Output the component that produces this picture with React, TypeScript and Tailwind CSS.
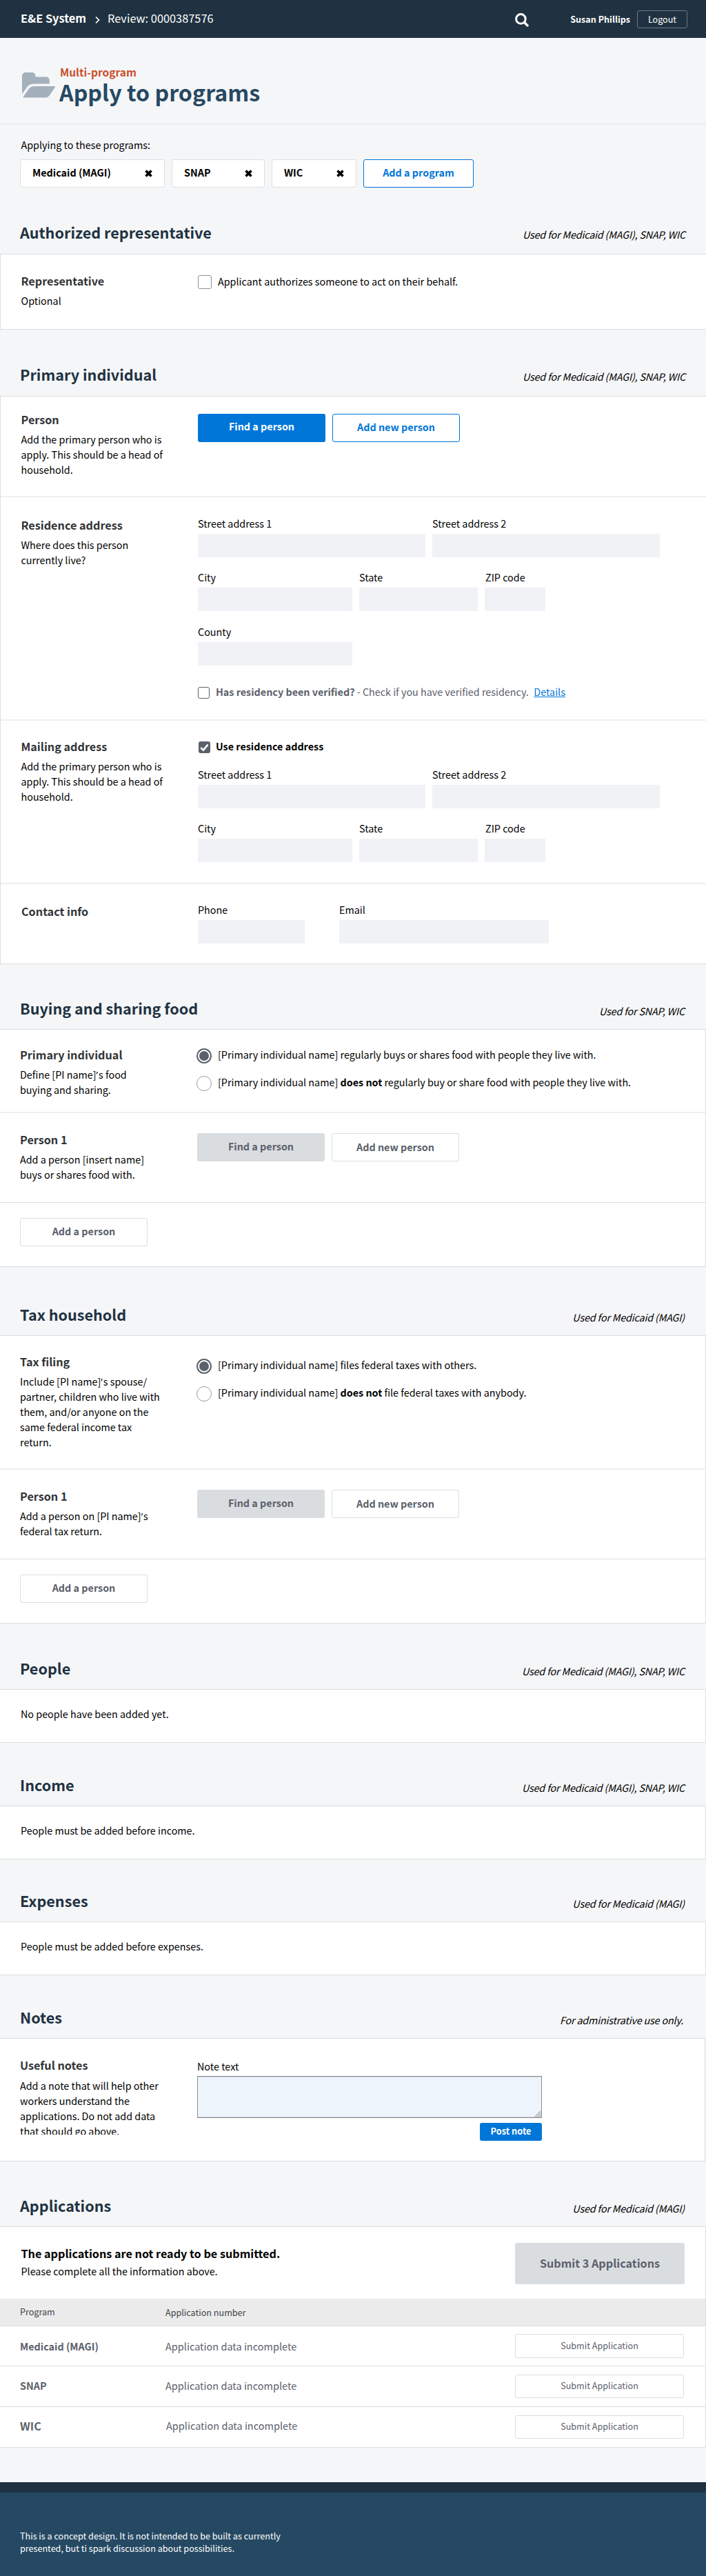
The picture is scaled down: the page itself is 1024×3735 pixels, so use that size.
import React from 'react';

type Kids = { children?: React.ReactNode };

const MEDICAID_SNAP_WIC = 'Used for Medicaid (MAGI), SNAP, WIC';

function SearchIcon() {
  return (
    <svg width="20" height="20" viewBox="0 0 20 20" fill="none" stroke="#fff" strokeLinecap="round">
      <circle cx="8.4" cy="8.4" r="6.8" strokeWidth="3" />
      <path d="M13.6 13.6L18 18" strokeWidth="3.4" />
    </svg>
  );
}

function FolderIcon() {
  return (
    <svg width="48" height="37" viewBox="0 0 48 37" fill="#a4b0bc">
      <path d="M0 31.3V5.5C0 2.2 2.200 0 5.500 0H14C17.300 0 19.500 2.200 19.500 5.500V6.600H34.500C37.700 6.600 39.700 8.600 39.700 11.600V16.400H17.500C13 16.400 10.300 17.600 7.800 20.600Z" />
      <path d="M2.300 36.500C1.600 36.500 1.400 35.700 1.900 35L9.500 24.300C11.800 21.200 14.300 20 17.800 20H47C48 20 48.300 20.800 47.800 21.600L40.800 32C38.700 35.100 36.500 36.500 33.200 36.500Z" />
    </svg>
  );
}

function CloseIcon() {
  return (
    <svg className="mt-[7px]" width="11" height="11" viewBox="0 0 11 11" stroke="#000" strokeWidth="3.7">
      <path d="M1.500 1.500L9.500 9.500M9.500 1.500L1.500 9.500" />
    </svg>
  );
}

/* The CJK face draws the curly apostrophe at full width, so it is set in a Latin face. */
function Apostrophe() {
  return <span className="font-['Open_Sans'] leading-none tracking-[1px]">’</span>;
}

function Chip({ label, className }: { label: string; className: string }) {
  return (
    <div className={`flex h-[41px] items-start justify-between rounded-[3px] border border-[#dcdee0] bg-white pt-[7px] pr-[17px] pl-[17px] font-bold ${className}`}>
      <span>{label}</span>
      <CloseIcon />
    </div>
  );
}

function SectionHead({ title, note, className, noteClass = '' }: { title: string; note: string; className: string; noteClass?: string }) {
  return (
    <div className={`flex items-end justify-between pl-[29px] ${className}`}>
      <h2 className="text-[21.6px] leading-[30px] font-bold text-[#203241]">{title}</h2>
      <p className={`tracking-[-0.17px] italic ${noteClass}`}>{note}</p>
    </div>
  );
}

function Card({ children, className = '' }: Kids & { className?: string }) {
  return <div className={`border-y border-[#dcdee0] bg-white ${className}`}>{children}</div>;
}

function SideText({ title, children, className, textClass = 'mt-[7px]' }: Kids & { title: string; className: string; textClass?: string }) {
  return (
    <div className={`w-[286px] shrink-0 ${className}`}>
      <h3 className="text-[16.2px] leading-[22px] font-bold text-[#323437]">{title}</h3>
      <p className={`whitespace-nowrap ${textClass}`}>{children}</p>
    </div>
  );
}

function Field({ label, className, labelClass = '' }: { label: string; className: string; labelClass?: string }) {
  return (
    <label className={`flex flex-col gap-1 ${className}`}>
      <span className={labelClass}>{label}</span>
      <input className="block h-[34px] w-full bg-[#f1f2f6]" />
    </label>
  );
}

function StreetFields() {
  return (
    <div className="flex gap-[10px]">
      <Field label="Street address 1" className="w-[330px]" />
      <Field label="Street address 2" className="w-[330px]" />
    </div>
  );
}

function CityFields() {
  return (
    <div className="mt-[18px] flex gap-[10px]">
      <Field label="City" className="w-[224px]" />
      <Field label="State" className="w-[172px]" />
      <Field label="ZIP code" className="w-[88px]" labelClass="pl-px" />
    </div>
  );
}

function Radio({ checked = false, children }: Kids & { checked?: boolean }) {
  return (
    <div className="flex h-10 items-start">
      {checked ? (
        <span className="mt-[2px] -ml-px flex size-[22px] items-center justify-center rounded-full border-2 border-[#5b616b]">
          <span className="size-[14px] rounded-full bg-[#5b616b]" />
        </span>
      ) : (
        <span className="mt-[2px] -ml-px size-[22px] rounded-full border border-[#9b9da1]" />
      )}
      <span className="ml-[9px]">{children}</span>
    </div>
  );
}

function PersonButtons({ active = false }: { active?: boolean }) {
  return (
    <div className="flex gap-[10px] font-bold">
      <button className={`flex h-[41px] w-[185px] items-start justify-center rounded-[3px] ${active ? 'bg-[#0076d8] pt-[7px] text-white' : 'bg-[#dadde0] pt-2 text-[#5b616b]'}`}>
        Find a person
      </button>
      <button className={`flex h-[41px] w-[185px] items-start justify-center rounded-[3px] border bg-white ${active ? 'border-[#0076d8] pt-[7px] text-[#0076d8]' : 'border-[#dcdee0] pt-2 text-[#5b616b]'}`}>
        Add new person
      </button>
    </div>
  );
}

function AddPersonRow() {
  return (
    <div className="h-[92px] pt-[22px] pl-[29px]">
      <button className="flex h-[41px] w-[185px] items-start justify-center rounded-[3px] border border-[#dcdee0] bg-white pt-[7px] font-bold text-[#5b616b]">
        Add a person
      </button>
    </div>
  );
}

const applications = [
  { name: 'Medicaid (MAGI)', row: 'h-[58px]', nameCls: 'mt-[18px]', dataCls: 'mt-[18px]', btn: 'mt-[11px] h-[35px] pt-[7px]' },
  { name: 'SNAP', row: 'h-[59px]', nameCls: 'mt-[17px]', dataCls: 'mt-[17px]', btn: 'mt-[12px] h-[34px] pt-[6px]' },
  { name: 'WIC', row: 'h-[59px]', nameCls: 'mt-[16px] text-[16.2px]', dataCls: 'mt-[16px] pl-px', btn: 'mt-[12px] h-[34px] pt-[6px]' },
];

export default function App() {
  return (
    <div
      className="flex h-[3735px] w-[1024px] flex-col bg-[#f5f6f8] text-[14.35px] leading-[22px] text-black"
      style={{ fontFamily: '"Noto Sans CJK SC", "Noto Sans", sans-serif' }}
    >
      <header className="flex h-[55px] shrink-0 items-start bg-[#203241] pr-[27px] pl-[30px] text-white">
        <div className="mt-[15px] flex items-start text-[16.35px]">
          <span className="font-bold">E&amp;E System</span>
          <svg className="mt-[9px] mr-[11px] ml-[13px]" width="7" height="10" viewBox="0 0 7 10" fill="none" stroke="#fff" strokeWidth="1.6">
            <path d="M1 0.700L5.500 5L1 9.300" />
          </svg>
          <span>Review: 0000387576</span>
        </div>
        <div className="mt-[19px] ml-auto">
          <SearchIcon />
        </div>
        <div className="flex w-[230px] items-start justify-end gap-[10px] text-[12.6px] leading-[18px]">
          <span className="mt-[19px] font-bold">Susan Phillips</span>
          <button className="mt-[15px] flex h-[26px] w-[73px] justify-center rounded-[3px] border border-[#6d7883] pt-[3px]">Logout</button>
        </div>
      </header>

      <div className="flex h-[126px] shrink-0 items-start border-b-2 border-[#edeef0] pt-[38px] pl-8">
        <div className="mt-[12px] w-[54px]">
          <FolderIcon />
        </div>
        <div>
          <p className="pl-[1px] text-[15.5px] leading-[22px] font-bold text-[#c8512d]">Multi-program</p>
          <h1 className="-mt-[5px] text-[32.2px] leading-[46px] font-bold text-[#264963]">Apply to programs</h1>
        </div>
      </div>

      <div className="h-[91px] shrink-0 pt-[18px] pl-[29px]">
        <p className="pl-[1.500px]">Applying to these programs:</p>
        <div className="mt-[10px] flex gap-[10px]">
          <Chip label="Medicaid (MAGI)" className="w-[210px]" />
          <Chip label="SNAP" className="w-[135px]" />
          <Chip label="WIC" className="w-[123px]" />
          <button className="flex h-[41px] w-[160px] items-start justify-center rounded-[3px] border border-[#0076d8] bg-white pt-[7px] font-bold text-[#0076d8]">
            Add a program
          </button>
        </div>
      </div>

      <SectionHead title="Authorized representative" note={MEDICAID_SNAP_WIC} className="h-[96px] shrink-0 pr-[30px] pb-4" noteClass="mb-px" />
      <Card className="flex h-[110px] shrink-0 border-l">
        <SideText title="Representative" className="pt-[27px] pl-[29.5px]">Optional</SideText>
        <div className="flex items-start pt-[28px]">
          <span className="mt-[2px] size-5 rounded-[3px] border border-[#8f9297]" />
          <span className="ml-[9px]">Applicant authorizes someone to act on their behalf.</span>
        </div>
      </Card>

      <SectionHead title="Primary individual" note={MEDICAID_SNAP_WIC} className="h-[96px] shrink-0 pr-[30px] pb-4" noteClass="mb-px" />
      <Card className="shrink-0 border-l">
        <div className="flex h-[146px] border-b-2 border-[#eeeff0]">
          <SideText title="Person" className="pt-[22px] pl-[29.5px]">
            Add the primary person who is<br />apply. This should be a head of<br />household.
          </SideText>
          <div className="pt-[25px]"><PersonButtons active /></div>
        </div>
        <div className="flex h-[324px] border-b-2 border-[#eeeff0]">
          <SideText title="Residence address" className="pt-[29px] pl-[29.5px]">
            Where does this person<br />currently live?
          </SideText>
          <div className="pt-[27px]">
            <StreetFields />
            <CityFields />
            <Field label="County" className="mt-[19px] w-[224px]" />
            <div className="mt-[27px] flex items-start whitespace-pre text-[#5b616b]">
              <span className="mt-1 size-[17px] rounded-[3px] border border-[#5b616b]" />
              <span className="ml-[9px] font-bold">Has residency been verified?</span>
              <span> - Check if you have verified residency.</span>
              <a className="ml-[7.5px] text-[#0076d8] underline">Details</a>
            </div>
          </div>
        </div>
        <div className="flex h-[237px] border-b-2 border-[#eeeff0]">
          <SideText title="Mailing address" className="pt-[26px] pl-[29.5px]">
            Add the primary person who is<br />apply. This should be a head of<br />household.
          </SideText>
          <div className="pt-[26px]">
            <div className="mb-[19px] flex items-start pl-px">
              <span className="mt-1 flex size-[17px] items-center justify-center rounded-[3px] bg-[#5b616b]">
                <svg width="13" height="12" viewBox="0 0 13 12" fill="none" stroke="#fff" strokeWidth="2.600">
                  <path d="M1.300 6.300L4.900 9.600L11.500 1.600" />
                </svg>
              </span>
              <span className="ml-2 font-bold">Use residence address</span>
            </div>
            <StreetFields />
            <CityFields />
          </div>
        </div>
        <div className="flex h-[115px]">
          <SideText title="Contact info" className="pt-[28px] pl-[30px]" />
          <div className="flex gap-[50px] pt-[26px]">
            <Field label="Phone" className="w-[155px]" />
            <Field label="Email" className="w-[304px]" />
          </div>
        </div>
      </Card>

      <SectionHead title="Buying and sharing food" note="Used for SNAP, WIC" className="h-[94px] shrink-0 pr-[31px] pb-[15px]" />
      <Card className="shrink-0 border-r">
        <div className="flex h-[121px] border-b-2 border-[#eeeff0]">
          <SideText title="Primary individual" className="pt-[25px] pl-[29px]">
            Define [PI name]<Apostrophe />s food<br />buying and sharing.
          </SideText>
          <div className="pt-[25px]">
            <Radio checked>[Primary individual name] regularly buys or shares food with people they live with.</Radio>
            <Radio>[Primary individual name] <b>does not</b> regularly buy or share food with people they live with.</Radio>
          </div>
        </div>
        <div className="flex h-[130px] border-b border-[#dcdee0]">
          <SideText title="Person 1" className="pt-[27px] pl-[29px]">
            Add a person [insert name]<br />buys or shares food with.
          </SideText>
          <div className="pt-[29px]"><PersonButtons /></div>
        </div>
        <AddPersonRow />
      </Card>

      <SectionHead title="Tax household" note="Used for Medicaid (MAGI)" className="h-[99px] shrink-0 pr-[31px] pb-[15px]" />
      <Card className="shrink-0 border-r">
        <div className="flex h-[194px] border-b-2 border-[#eeeff0]">
          <SideText title="Tax filing" className="pt-[26px] pl-[29px]">
            Include [PI name]<Apostrophe />s spouse/<br />partner, children who live with<br />them, and/or anyone on the<br />same federal income tax<br />return.
          </SideText>
          <div className="pt-[31px]">
            <Radio checked>[Primary individual name] files federal taxes with others.</Radio>
            <Radio>[Primary individual name] <b>does not</b> file federal taxes with anybody.</Radio>
          </div>
        </div>
        <div className="flex h-[130px] border-b border-[#dcdee0]">
          <SideText title="Person 1" className="pt-[27px] pl-[29px]">
            Add a person on [PI name]<Apostrophe />s<br />federal tax return.
          </SideText>
          <div className="pt-[29px]"><PersonButtons /></div>
        </div>
        <AddPersonRow />
      </Card>

      <SectionHead title="People" note={MEDICAID_SNAP_WIC} className="h-[95px] shrink-0 pr-[31px] pb-[15px]" />
      <Card className="h-[78px] shrink-0 border-r pt-6 pl-[30px]">No people have been added yet.</Card>

      <SectionHead title="Income" note={MEDICAID_SNAP_WIC} className="h-[91px] shrink-0 pr-[31px] pb-[15px]" />
      <Card className="h-[78px] shrink-0 border-r pt-6 pl-[30px]">People must be added before income.</Card>

      <SectionHead title="Expenses" note="Used for Medicaid (MAGI)" className="h-[90px] shrink-0 pr-[31px] pb-[15px]" />
      <Card className="h-[78px] shrink-0 border-r pt-6 pl-[30px]">People must be added before expenses.</Card>

      <SectionHead title="Notes" note="For administrative use only." className="h-[91px] shrink-0 pr-[33px] pb-[15px]" />
      <Card className="flex h-[179px] w-[1023px] shrink-0 border-r">
        <SideText title="Useful notes" className="pt-[27px] pl-[29px]" textClass="mt-2 h-[82px] overflow-hidden">
          Add a note that will help other<br />workers understand the<br />applications. Do not add data<br />that should go above.
        </SideText>
        <div className="flex w-[500px] flex-col pt-[29px]">
          <span>Note text</span>
          <div className="mt-[3px] flex h-[61px] items-end justify-end border border-[#8b8e92] bg-[#edf4fc] shadow-[inset_0_1px_0_#ccd2d8,inset_0_-1px_0_#ccd2d8]">
            <svg width="10" height="10" viewBox="0 0 10 10" stroke="#85888c" strokeWidth="1">
              <path d="M0.500 9.500L9.500 0.500M3 9.500L9.500 3M5.500 9.500L9.500 5.500M8 9.500L9.500 8" />
            </svg>
          </div>
          <button className="mt-[7px] flex h-[26px] w-[90px] justify-center self-end rounded-[3px] bg-[#0076d8] pt-[3px] text-[12.8px] leading-[18px] font-bold text-white">
            Post note
          </button>
        </div>
      </Card>

      <SectionHead title="Applications" note="Used for Medicaid (MAGI)" className="h-[94px] shrink-0 pr-[31px] pb-[15px]" />
      <div className="shrink-0 border-t border-r border-[#dcdee0] bg-white">
        <div className="flex h-[104px] justify-between pr-[30px] pl-[30.500px]">
          <div className="pt-[27px]">
            <p className="text-[16.2px] font-bold">The applications are not ready to be submitted.</p>
            <p className="mt-1">Please complete all the information above.</p>
          </div>
          <button className="mt-[23px] flex h-[60px] w-[246px] items-start justify-center rounded-[3px] bg-[#dadde0] pt-[18px] text-[16.2px] font-bold text-[#5b616b]">
            Submit 3 Applications
          </button>
        </div>
        <div className="flex h-10 items-start border-b border-[#dcdee0] bg-[#ebebeb] pl-[29px] text-[12.6px] leading-[18px] text-[#3e4349]">
          <span className="mt-[10px] w-[211px]">Program</span>
          <span className="mt-[11px]">Application number</span>
        </div>
        {applications.map((a) => (
          <div key={a.name} className={`flex items-start border-b border-[#dcdee0] pr-[31px] pl-[29px] text-[#5b616b] ${a.row}`}>
            <span className={`w-[211px] font-bold ${a.nameCls}`}>{a.name}</span>
            <span className={`text-[14.5px] ${a.dataCls}`}>Application data incomplete</span>
            <button className={`ml-auto flex w-[245px] justify-center rounded-[3px] border border-[#dcdee0] bg-white text-[12.6px] leading-[18px] ${a.btn}`}>
              Submit Application
            </button>
          </div>
        ))}
      </div>

      <footer className="mt-[50px] flex-1 border-t-[15px] border-[#203241] bg-[#264963] pt-[54px] pl-[29px] text-[12.6px] leading-[18px] text-white">
        This is a concept design. It is not intended to be built as currently
        <br />
        presented, but ti spark discussion about possibilities.
      </footer>
    </div>
  );
}
